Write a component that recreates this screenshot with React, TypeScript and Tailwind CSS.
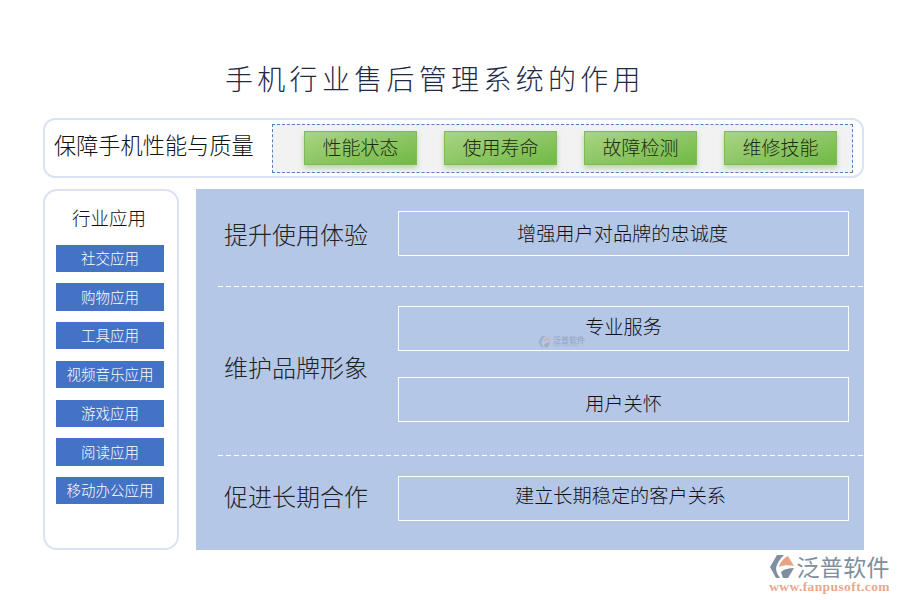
const cjk = "font-['Noto_Sans_CJK_SC',sans-serif]";

const checks = ['性能状态', '使用寿命', '故障检测', '维修技能'];

const apps = [
    { name: '社交应用', box: 'h-[27px]' },
    { name: '购物应用', box: 'h-[28px]' },
    { name: '工具应用', box: 'h-[27px] mb-px' },
    { name: '视频音乐应用', box: 'h-[27px] mb-px' },
    { name: '游戏应用', box: 'h-[27px]' },
    { name: '阅读应用', box: 'h-[28px]' },
    { name: '移动办公应用', box: 'h-[27px]' },
];

function LogoMark({ className }: { className: string }) {
    return (
        <svg viewBox="0 0 26 26" className={className}>
            <path d="M8 2 L15 2 C11 6 8 10 7 15 C7 19 9 22 11 25 L7 25 L1 14 Z" fill="#7f8ea0" />
            <path d="M10 14 C11 9 15 5 19 3 L25 13 C20 12 14 12 10 14 Z" fill="#e9a382" />
            <path d="M12 19 C15 16 20 15 25 15 L19 25 L14 25 Z" fill="#7f8ea0" />
        </svg>
    );
}

function DetailBox({ text, textClass = '' }: { text: string; textClass?: string }) {
    return (
        <div className="flex h-[45px] w-[451px] items-center justify-center border border-white text-[19.2px] text-[#111]">
            <span className={textClass}>{text}</span>
        </div>
    );
}

function Divider() {
    return <div className="ml-[22px] h-px bg-[repeating-linear-gradient(90deg,#fff_0_5px,transparent_5px_8px)]" />;
}

export default function App() {
    return (
        <div className={`flex h-[600px] w-[900px] flex-col overflow-hidden bg-white font-light ${cjk}`}>
            <h1 className="mt-[58px] ml-[225px] h-[41px] text-[28px] leading-[41px] font-light tracking-[4.3px] text-[#1f2a48]">
                手机行业售后管理系统的作用
            </h1>

            <div className="mt-[19px] ml-[43px] flex h-[60px] w-[821px] items-center rounded-[12px] border-2 border-[#dae3f3] pr-[9px] pl-[9px]">
                <div className="w-[218px] pb-[6px] text-[22.2px] whitespace-nowrap text-[#111]">保障手机性能与质量</div>
                <div className="flex h-[49px] w-[581px] items-center gap-[27px] border border-dashed border-[#5580bd] bg-[#f2f2f2] pl-[31px]">
                    {checks.map((item) => (
                        <div
                            key={item}
                            className="flex h-[34px] w-[113px] items-center justify-center border border-[#7dbb55] bg-gradient-to-br from-[#a9d483] to-[#71b944] pb-[2px] text-[19px] text-[#1f2a14] shadow-[0_3px_5px_rgba(112,173,71,0.45)]"
                        >
                            {item}
                        </div>
                    ))}
                </div>
            </div>

            <div className="mt-[11px] ml-[43px] flex gap-[17px]">
                <div className="flex h-[361px] w-[136px] flex-col rounded-[14px] border-2 border-[#dae3f3] pl-[11px]">
                    <div className="mt-[13px] mb-[14px] w-[108px] pr-[2px] text-center text-[18.5px] leading-[27px] text-[#111]">行业应用</div>
                    <div className="flex flex-col gap-[11px]">
                        {apps.map((app) => (
                            <div
                                key={app.name}
                                className={`flex w-[108px] items-center justify-center bg-[#4472c4] pb-px text-[14.5px] text-white ${app.box}`}
                            >
                                {app.name}
                            </div>
                        ))}
                    </div>
                </div>

                <div className="relative flex h-[361px] w-[668px] flex-col bg-[#b4c7e7]">
                    <div className="flex h-[97px] items-center pl-[28px]">
                        <div className="w-[174px] pb-[8px] text-[24px] text-[#222]">提升使用体验</div>
                        <div className="mb-[9px]">
                            <DetailBox text="增强用户对品牌的忠诚度" textClass="mr-[2px]" />
                        </div>
                    </div>
                    <Divider />
                    <div className="flex h-[168px] items-center pl-[28px]">
                        <div className="w-[174px] pb-[8px] text-[24px] text-[#222]">维护品牌形象</div>
                        <div className="mb-[14px] flex flex-col gap-[26px]">
                            <DetailBox text="专业服务" textClass="mb-[4px]" />
                            <DetailBox text="用户关怀" textClass="mt-[8px]" />
                        </div>
                    </div>
                    <Divider />
                    <div className="flex flex-1 items-center pl-[28px]">
                        <div className="w-[174px] pb-[14px] text-[24px] text-[#222]">促进长期合作</div>
                        <div className="mb-[10px]">
                            <DetailBox text="建立长期稳定的客户关系" textClass="mr-[6px] mb-[6px]" />
                        </div>
                    </div>

                    {/* faint watermark over the panel */}
                    <div className="absolute top-[146px] left-[342px] flex items-center gap-[2px] opacity-40">
                        <LogoMark className="h-[13px] w-[13px]" />
                        <div className="flex flex-col text-[#74859a]">
                            <span className="text-[8px] leading-[9px] font-bold">泛普软件</span>
                            <span className="text-[3px] leading-[4px]">FANPU SOFTWARE</span>
                        </div>
                    </div>
                </div>
            </div>

            <div className="mt-[3px] mr-[10px] flex flex-col items-end">
                <div className="flex items-center gap-[1px]">
                    <LogoMark className="h-[26px] w-[26px]" />
                    <div className="text-[23px] leading-[26px] font-normal tracking-[0.4px] text-[#7f8ea0]">泛普软件</div>
                </div>
                <div className="mt-px font-['Liberation_Serif',serif] text-[13.5px] leading-[14px] font-bold tracking-[0.4px] text-[#e8a88c]">
                    www.fanpusoft.com
                </div>
            </div>
        </div>
    );
}
